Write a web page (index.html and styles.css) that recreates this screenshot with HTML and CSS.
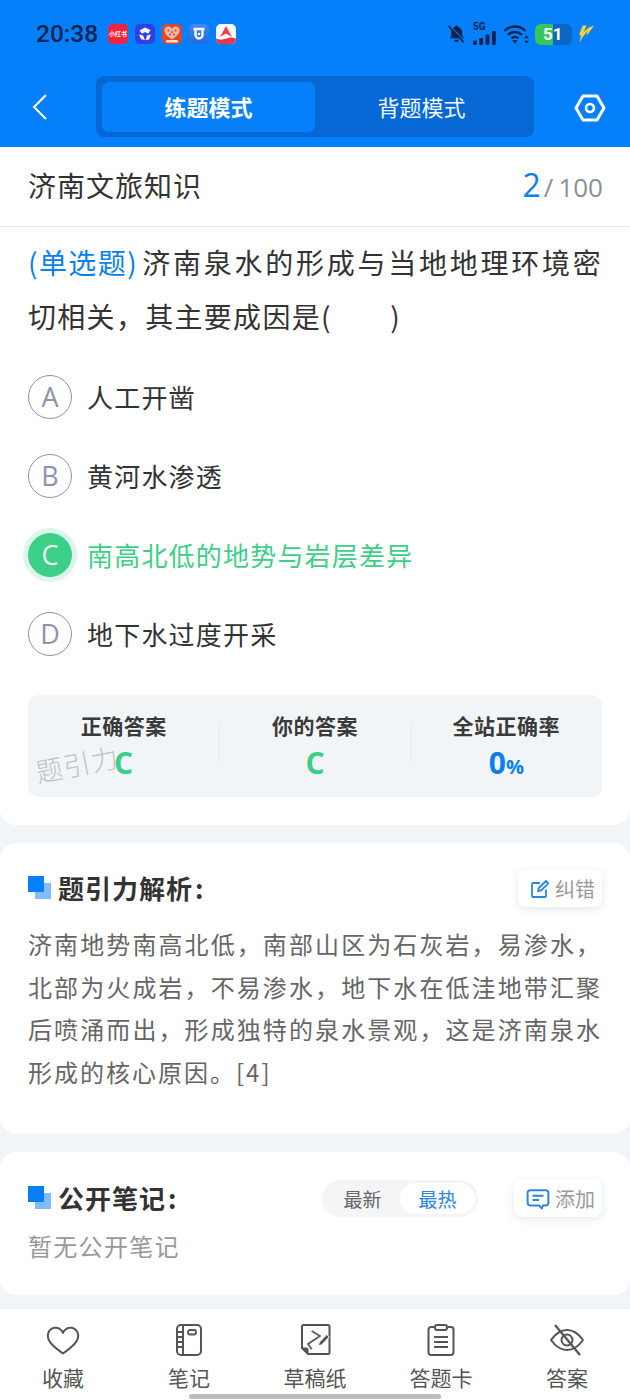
FILE: index.html
```html
<!DOCTYPE html>
<html lang="zh-CN">
<head>
<meta charset="utf-8">
<title>练题模式</title>
<link rel="stylesheet" href="styles.css">
</head>
<body>
<div class="phone">
  <header class="top">
    <div class="status">
      <span class="time">20:38</span>
      <div class="apps">
        <span class="app app-red"><span class="mini">小红书</span></span>
        <span class="app app-indigo"><svg viewBox="0 0 20 20"><path d="M10 3.500l5.500 2.500-2.300 3.800L10 8 7 9.800 4.500 6.500zM4 10.500l4 1 2 4.500-3.800-.8zM12 11.500l4-1-2 5-3.200.7z" fill="#fff"/></svg></span>
        <span class="app app-heart"><svg viewBox="0 0 20 20"><path d="M10 15.500C5 12 2.500 9.500 2.500 6.500a3.800 3.800 0 0 1 7.500-1 3.800 3.800 0 0 1 7.500 1c0 3-2.500 5.500-7.500 9z" fill="#f3b9a0"/><g fill="#d9452f"><circle cx="6.500" cy="6.500" r="1"/><circle cx="10" cy="8" r="1"/><circle cx="13.500" cy="6.500" r="1"/><circle cx="8" cy="10.500" r="1"/><circle cx="12" cy="10.500" r="1"/></g><rect x="4" y="16" width="12" height="2.500" rx="1" fill="#fbe3d2"/></svg></span>
        <span class="app app-blue"><svg viewBox="0 0 20 20"><path d="M6.500 5v6a3.500 3.500 0 0 0 7 0V5M4.500 5h11" fill="none" stroke="#fff" stroke-width="2.300"/><circle cx="10" cy="10" r="1.300" fill="#fff"/></svg></span>
        <span class="app app-white"><svg viewBox="0 0 20 20"><path d="M10 2l6 11-6-3.500L4 13z" fill="#ee3f4d"/><path d="M0 14.500c4 1.500 6 1.500 10 0s6-1.500 10 0V20H0z" fill="#e8374a"/></svg></span>
      </div>
      <div class="sys">
        <svg class="bell" viewBox="0 0 20 20"><path d="M10 1a1.600 1.600 0 0 1 1.600 1.600c2.700.8 4.400 3 4.400 5.900v3.500l2 2.500H3l1.500-2.500V8.500c0-1 .2-2 .6-2.900C5.900 4.100 7 3 8.400 2.600A1.600 1.600 0 0 1 10 1zM7.500 16h5a2.500 2.500 0 0 1-5 0z" fill="#0a2350"/><path d="M2.500 1l16 17" stroke="#0580fa" stroke-width="1.500"/><path d="M1.500 1.500l16 17" stroke="#0a2350" stroke-width="1.800"/></svg>
        <span class="signal"><span class="fiveg">5G</span><svg viewBox="0 0 25 14"><rect x="1" y="9.500" width="3.800" height="4.500" rx="1.200"/><rect x="7.300" y="7" width="3.800" height="7" rx="1.200"/><rect x="13.600" y="3.500" width="3.800" height="10.500" rx="1.200"/><rect x="20" y="0" width="3.800" height="14" rx="1.200"/></svg></span>
        <svg class="wifi" viewBox="0 0 27 20"><path d="M1.500 6.800C7.500 1 16.500 1 22.500 6.800M5 10.800c4.200-3.700 9.800-3.700 14 0M8.500 14.300c2.200-1.800 4.800-1.800 7 0" fill="none" stroke="#0a2350" stroke-width="2.400"/><path d="M12 19.500l-2.800-3.200h5.600zM23.500 11.500l2.500 2.800h-5zM23.500 19.500l-2.500-2.800h5z" fill="#0a2350"/></svg>
        <span class="battery"><span class="level"></span><span class="num">51</span></span>
        <svg class="bolt" viewBox="0 0 18 20"><path d="M5 1h4L6 8l5-4.500L17 1l-6 8.500-2.500 1.500 2-5L4.500 14 2 19l1-8.500L1 11z" fill="#f2d13d"/></svg>
      </div>
    </div>
    <nav class="bar">
      <svg class="back" viewBox="0 0 18 28"><path d="M15 2L3 14l12 12" fill="none" stroke="#fff" stroke-width="2"/></svg>
      <div class="tabs">
        <span class="tab tab-on">练题模式</span>
        <span class="tab">背题模式</span>
      </div>
      <svg class="gear" viewBox="0 0 32 28"><path d="M9 2h14l7 12-7 12H9L2 14z" fill="none" stroke="#fff" stroke-width="3" stroke-linejoin="round"/><circle cx="16" cy="14" r="4" fill="none" stroke="#fff" stroke-width="2.600"/></svg>
    </nav>
  </header>

  <main class="main">
    <section class="card card-q">
      <div class="qhead">
        <h1 class="qtitle">济南文旅知识</h1>
        <div class="progress"><span class="cur">2</span><span class="slash">/</span><span class="total">100</span></div>
      </div>
      <p class="stem"><span class="qtype">(单选题)</span>济南泉水的形成与当地地理环境密切相关，其主要成因是(　　)</p>
      <ul class="options">
        <li class="opt"><span class="letter">A</span><span>人工开凿</span></li>
        <li class="opt"><span class="letter">B</span><span>黄河水渗透</span></li>
        <li class="opt opt-right"><span class="letter">C</span><span>南高北低的地势与岩层差异</span></li>
        <li class="opt"><span class="letter">D</span><span>地下水过度开采</span></li>
      </ul>
      <div class="stats">
        <div class="stat"><div class="stat-k">正确答案</div><div class="stat-v green">C</div></div>
        <div class="stat"><div class="stat-k">你的答案</div><div class="stat-v green">C</div></div>
        <div class="stat"><div class="stat-k">全站正确率</div><div class="stat-v blue">0<small>%</small></div></div>
        <span class="mark">题引力</span>
      </div>
    </section>

    <section class="card card-a">
      <div class="sec-head">
        <h2 class="sec-title"><span class="sq"></span>题引力解析<span class="colon">:</span></h2>
        <span class="chip"><svg viewBox="0 0 20 20"><path d="M16 10.500V17a1 1 0 0 1-1 1H3a1 1 0 0 1-1-1V5a1 1 0 0 1 1-1h7" fill="none" stroke="#2a86e0" stroke-width="1.800"/><path d="M8 12l.7-3L16 2l2.300 2.300L11 11.500z" fill="none" stroke="#2a86e0" stroke-width="1.800" stroke-linejoin="round"/></svg>纠错</span>
      </div>
      <p class="analysis">济南地势南高北低，南部山区为石灰岩，易渗水，北部为火成岩，不易渗水，地下水在低洼地带汇聚后喷涌而出，形成独特的泉水景观，这是济南泉水形成的核心原因。[4]</p>
    </section>

    <section class="card card-n">
      <div class="sec-head">
        <h2 class="sec-title"><span class="sq"></span>公开笔记<span class="colon">:</span></h2>
        <div class="note-tools">
          <div class="seg"><span class="seg-i">最新</span><span class="seg-i seg-on">最热</span></div>
          <span class="chip chip-add"><svg viewBox="0 0 22 20"><path d="M4 2h14a2.500 2.500 0 0 1 2.500 2.500v9A2.500 2.500 0 0 1 18 16h-2.500l-1 2.500-2.500-2.500H4a2.500 2.500 0 0 1-2.500-2.500v-9A2.500 2.500 0 0 1 4 2z" fill="none" stroke="#2a86e0" stroke-width="1.800"/><path d="M6 7h10M6 11h6" stroke="#2a86e0" stroke-width="1.800"/></svg>添加</span>
        </div>
      </div>
      <p class="empty">暂无公开笔记</p>
    </section>
  </main>

  <footer class="dock">
    <div class="dock-i">
      <svg viewBox="0 0 34 32"><path d="M17 29.500C8 23 1.800 18 1.800 11.500a7.800 7.800 0 0 1 15.200-2.500 7.800 7.800 0 0 1 15.200 2.500c0 6.500-6.200 11.500-15.200 18z" fill="none" stroke="#555" stroke-width="2" stroke-linejoin="round"/></svg>
      <span>收藏</span>
    </div>
    <div class="dock-i">
      <svg viewBox="0 0 34 32"><rect x="5" y="1" width="24" height="30" rx="4" fill="none" stroke="#555" stroke-width="2"/><path d="M11 1v30M5 8h6M5 13h6M5 18h6M5 23h6" stroke="#555" stroke-width="2"/><rect x="16" y="6" width="8" height="4.500" rx="2" fill="none" stroke="#555" stroke-width="1.800"/></svg>
      <span>笔记</span>
    </div>
    <div class="dock-i">
      <svg viewBox="0 0 34 32"><path d="M6 1h24a1.500 1.500 0 0 1 1.500 1.500v26A1.500 1.500 0 0 1 30 30H10l-6-6V2.500A1.500 1.500 0 0 1 6 1z" fill="none" stroke="#555" stroke-width="2"/><path d="M4 23.500h4.500a2 2 0 0 1 2 2V30z" fill="#555"/><path d="M13.700 7L22 12 10 20l3.700 5.300" fill="none" stroke="#555" stroke-width="1.700"/><path d="M20.300 22l1-3.800 7.500-7.700 2.500 2.500-7.500 7.700z" fill="#555" stroke="#fff" stroke-width="1"/></svg>
      <span>草稿纸</span>
    </div>
    <div class="dock-i">
      <svg viewBox="0 0 34 32"><path d="M10 3H7a2.500 2.500 0 0 0-2.500 2.500v23A2.500 2.500 0 0 0 7 31h20a2.500 2.500 0 0 0 2.500-2.500v-23A2.500 2.500 0 0 0 27 3h-3" fill="none" stroke="#555" stroke-width="2"/><rect x="11" y="1" width="12" height="5" rx="2" fill="none" stroke="#555" stroke-width="2"/><path d="M10 13h14M10 18h14M10 23h14" stroke="#555" stroke-width="2"/></svg>
      <span>答题卡</span>
    </div>
    <div class="dock-i">
      <svg viewBox="0 0 34 32"><path d="M1 16C6 9 11 6 17 6s11 3 16 10c-5 7-10 10-16 10S6 23 1 16z" fill="none" stroke="#555" stroke-width="2"/><circle cx="17" cy="16" r="5.500" fill="none" stroke="#555" stroke-width="2"/><path d="M5 1l25 30" stroke="#555" stroke-width="2.200"/></svg>
      <span>答案</span>
    </div>
    <span class="home"></span>
  </footer>
</div>
</body>
</html>
```
FILE: styles.css
```css
* { box-sizing: border-box; }
html, body { margin: 0; padding: 0; }
body {
  width: 630px;
  height: 1400px;
  overflow: hidden;
  background: #f2f5f8;
  font-family: "Noto Sans CJK SC", "Noto Sans", sans-serif;
  color: #333;
}
.phone { width: 630px; height: 1400px; display: flex; flex-direction: column; position: relative; }

.top { height: 147px; background: #0580fa; flex: none; }
.status { height: 68px; padding: 19px 35px 0 36px; display: flex; align-items: flex-start; }
.time { font-family: Roboto, sans-serif; font-size: 24.500px; font-weight: 500; line-height: 30px; color: #0a2350; width: 72px; }
.apps { display: flex; gap: 7px; margin-top: 5px; }
.app { width: 20px; height: 20px; border-radius: 5px; display: flex; align-items: center; justify-content: center; overflow: hidden; }
.app svg { width: 20px; height: 20px; display: block; }
.app-red { background: #f5223f; }
.mini { font-size: 6px; line-height: 8px; color: #fff; font-weight: 700; white-space: nowrap; }
.app-indigo { background: #2f3fe8; }
.app-heart { background: #e2452f; }
.app-blue { background: linear-gradient(#3f8bf0, #2368e0); }
.app-white { background: #fff; }
.sys { margin-left: auto; display: flex; align-items: center; height: 24px; margin-top: 3px; }
.bell { width: 19px; height: 20px; margin-right: 6px; }
.signal { position: relative; width: 25px; height: 22px; display: block; margin-right: 6px; }
.signal svg { position: absolute; left: 0; bottom: 0; width: 25px; height: 14px; fill: #0a2350; }
.fiveg { position: absolute; left: 1px; top: -1px; font-family: Roboto, sans-serif; font-size: 10px; line-height: 10px; font-weight: 700; color: #0a2350; }
.wifi { width: 27px; height: 20px; margin-right: 5px; }
.battery { position: relative; width: 37px; height: 21px; border-radius: 6px; background: #0c66c6; overflow: hidden; margin-right: 6px; display: block; }
.level { position: absolute; left: 0; top: 0; bottom: 0; width: 18px; background: #35c759; }
.num { position: absolute; left: 8px; top: 0; font-family: Roboto, sans-serif; font-size: 17px; line-height: 21px; font-weight: 700; color: #fff; }
.bolt { width: 17px; height: 20px; }

.bar { height: 79px; display: flex; align-items: flex-start; padding: 8px 24px 0 31px; }
.back { width: 18px; height: 28px; margin-top: 17px; flex: none; }
.tabs { margin-left: 47px; width: 438px; height: 61px; background: #0568d4; border-radius: 8px; padding: 6px 6px 5px; display: flex; flex: none; }
.tab { flex: 1; display: flex; align-items: center; justify-content: center; font-size: 22px; color: #f2f7fd; border-radius: 7px; padding-bottom: 2px; }
.tab-on { background: #0580fa; color: #fff; font-weight: 700; }
.gear { width: 32px; height: 28px; margin-left: 40px; margin-top: 18px; flex: none; }

.main { flex: 1; display: flex; flex-direction: column; gap: 18px; min-height: 0; }
.card { background: #fff; border-radius: 0 0 16px 16px; }
.card-q { height: 678px; padding: 0 28px; flex: none; }
.card-a { height: 291px; padding: 27px 28px 0; border-radius: 16px; flex: none; }
.card-n { height: 143px; padding: 28px 28px 0; border-radius: 16px; flex: none; }

.qhead { margin: 0 -28px; height: 80px; padding: 0 27px 4px 28px; display: flex; align-items: center; justify-content: space-between; border-bottom: 1px solid #e9ebee; }
.qtitle { margin: 0; font-size: 28px; font-weight: 400; color: #333; letter-spacing: 1px; }
.progress { display: flex; align-items: baseline; font-family: "Open Sans", sans-serif; color: #8a8f96; font-size: 26px; }
.cur { color: #0a80f0; font-size: 32px; }
.slash { margin: 0 5px 0 3px; }
.stem { margin: 8px 0 0; font-size: 28px; line-height: 54px; color: #333; letter-spacing: 1.300px; text-align: justify; }
.qtype { color: #0a80f0; letter-spacing: 0; margin-right: 4px; }
.options { list-style: none; margin: 14px 0 0; padding: 0; }
.opt { height: 79px; display: flex; align-items: center; gap: 15px; font-size: 26px; letter-spacing: 1.200px; color: #333; }
.letter { width: 44px; height: 44px; border-radius: 50%; border: 1.500px solid #8e92ab; color: #8e92ab; display: flex; align-items: center; justify-content: center; font-family: "Open Sans", sans-serif; font-size: 27px; letter-spacing: 0; flex: none; }
.opt-right { color: #3ccf87; }
.opt-right .letter { background: #3ccf87; border-color: #3ccf87; color: #eafbf2; box-shadow: 0 0 0 5px #ddf6e9; }
.stats { position: relative; margin-top: 22px; height: 102px; background: #f2f5f8; border-radius: 10px; display: flex; padding-top: 15px; }
.stat { flex: 1; text-align: center; }
.stat-k { font-size: 21px; line-height: 30px; font-weight: 700; color: #3a3a3a; letter-spacing: .5px; }
.stat-v { font-family: "Open Sans", sans-serif; font-size: 30px; line-height: 36px; font-weight: 700; margin-top: 5px; }
.stat-v small { font-size: 20px; }
.stat + .stat { background: linear-gradient(#e6e9ee, #e6e9ee) left 32px / 1px 36px no-repeat; background-position: left 15px; }
.green { color: #3ccf87; }
.blue { color: #0a80f0; }
.mark { position: absolute; left: 8px; top: 60px; font-size: 27px; line-height: 34px; font-weight: 300; color: #bfc2c6; transform: rotate(-11deg); transform-origin: left center; letter-spacing: 1px; }

.sec-head { display: flex; align-items: center; justify-content: space-between; height: 37px; }
.sec-title { margin: 0; display: flex; align-items: center; font-size: 26px; font-weight: 700; color: #333; letter-spacing: 1px; padding-bottom: 2px; }
.colon { margin-left: 2px; }
.sq { position: relative; width: 23px; height: 23px; margin-right: 7px; background: linear-gradient(#80bcff, #80bcff) 7px 7px / 16px 16px no-repeat; flex: none; }
.sq::before { content: ""; position: absolute; left: 0; top: 0; width: 16px; height: 16px; background: #0580fa; }
.chip { display: flex; align-items: center; gap: 5px; height: 37px; padding: 0 7px 0 12px; border-radius: 8px; background: #fff; box-shadow: 0 2px 8px rgba(30, 60, 100, .12); font-size: 20px; color: #9a9a9a; }
.chip svg { width: 20px; height: 20px; flex: none; }
.chip-add svg { width: 24px; height: 22px; }
.analysis { margin: 16px 0 0; font-size: 24px; line-height: 42.700px; letter-spacing: 2px; color: #666; text-align: justify; }
.note-tools { display: flex; align-items: center; gap: 36px; }
.seg { display: flex; width: 156px; height: 37px; padding: 3px; background: #f4f5f6; border-radius: 19px; }
.seg-i { flex: 1; display: flex; align-items: center; justify-content: center; font-size: 19px; color: #666; border-radius: 16px; }
.seg-on { background: #fff; color: #2a86e0; }
.empty { margin: 11px 0 0; font-size: 24px; line-height: 36px; letter-spacing: 1.300px; color: #999; }

.dock { position: absolute; left: 0; right: 0; bottom: 0; height: 91px; background: #fff; display: flex; }
.dock-i { flex: 1; display: flex; flex-direction: column; align-items: center; padding-top: 15px; font-size: 21px; color: #555; }
.dock-i svg { width: 34px; height: 32px; display: block; margin-bottom: 6px; }
.dock-i span { line-height: 30px; }
.home { position: absolute; left: 189px; bottom: 1px; width: 252px; height: 5px; border-radius: 3px; background: #bdbdbd; }
```
